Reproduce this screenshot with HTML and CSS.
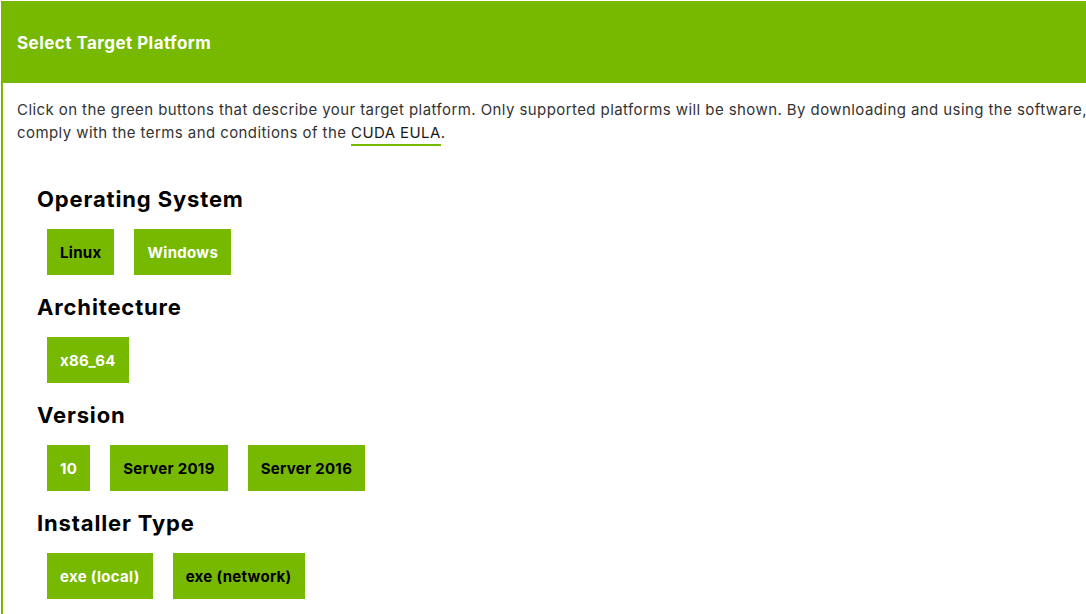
FILE: index.html
```html
<!DOCTYPE html>
<html>
<head>
<meta charset="utf-8">
<link rel="stylesheet" href="styles.css">
</head>
<body>
<div class="panel">
  <div class="panel-header">Select Target Platform</div>
  <div class="panel-body">
    <p class="intro">Click on the green buttons that describe your target platform. Only supported platforms will be shown. By downloading and using the software, you agree to fully comply with the terms and conditions of the <a class="eula" href="#">CUDA EULA</a>.</p>

    <div class="group">
      <h3 class="group-title">Operating System</h3>
      <div class="options">
        <span class="opt">Linux</span>
        <span class="opt opt-on">Windows</span>
      </div>
    </div>

    <div class="group">
      <h3 class="group-title">Architecture</h3>
      <div class="options">
        <span class="opt opt-on">x86_64</span>
      </div>
    </div>

    <div class="group">
      <h3 class="group-title">Version</h3>
      <div class="options">
        <span class="opt opt-on">10</span>
        <span class="opt">Server 2019</span>
        <span class="opt">Server 2016</span>
      </div>
    </div>

    <div class="group">
      <h3 class="group-title">Installer Type</h3>
      <div class="options">
        <span class="opt opt-on">exe (local)</span>
        <span class="opt">exe (network)</span>
      </div>
    </div>
  </div>
</div>
</body>
</html>
```

FILE: styles.css
```css
html, body {
  margin: 0;
  padding: 0;
  overflow: hidden;
  background: #fff;
}
body {
  padding: 1px 0 0 1px;
  font-family: Inter, "Noto Sans", sans-serif;
  color: #000;
}
.panel {
  width: 1300px;
  border-left: 2px solid #76b900;
}
.panel-header {
  background: #76b900;
  color: #fff;
  font-weight: 700;
  font-size: 17px;
  letter-spacing: 0.45px;
  height: 82px;
  display: flex;
  align-items: center;
  padding-left: 14px;
  padding-top: 2px;
  box-sizing: border-box;
}
.panel-body {
  padding: 15px 0 20px 14px;
}
.intro {
  margin: 0;
  width: 1222px;
  font-size: 15px;
  letter-spacing: 0.42px;
  line-height: 23px;
  color: #333;
}
.eula {
  color: #1a1a1a;
  text-decoration: none;
  border-bottom: 2px solid #76b900;
  padding-bottom: 2px;
}
.group {
  padding-left: 20px;
}
.group:first-of-type {
  margin-top: 40px;
}
.group-title {
  margin: 0;
  font-size: 22px;
  letter-spacing: 0.85px;
  line-height: 30px;
  font-weight: 700;
  color: #000;
}
.options {
  display: flex;
  gap: 20px;
  margin: 15px 0 17px 10px;
}
.opt {
  background: #76b900;
  color: #000;
  font-weight: 700;
  font-size: 15px;
  letter-spacing: 0.3px;
  height: 46px;
  box-sizing: border-box;
  display: flex;
  align-items: center;
  padding: 1px 13px 0;
}
.opt-on {
  color: #fff;
}
```
